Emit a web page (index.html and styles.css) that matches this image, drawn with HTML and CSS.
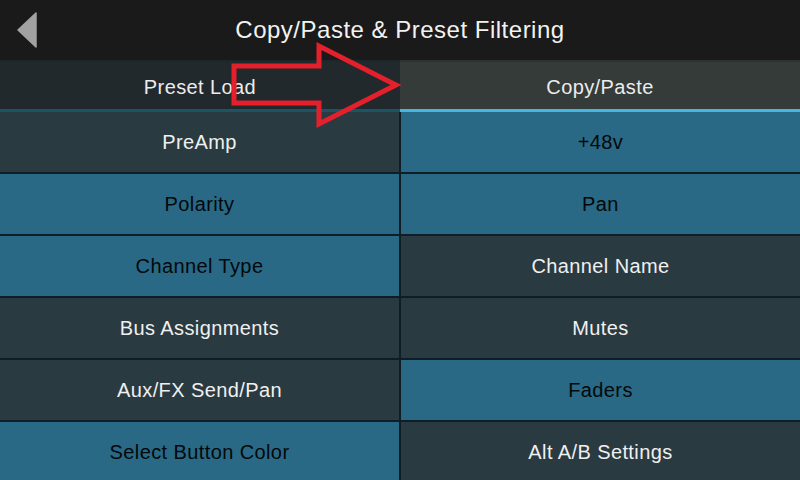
FILE: index.html
```html
<!DOCTYPE html>
<html>
<head>
<meta charset="utf-8">
<link rel="stylesheet" href="styles.css">
</head>
<body>
<div class="screen">
  <header class="header">
    <div class="back">
      <svg width="60" height="60" viewBox="0 0 60 60"><polygon points="36,13 18,30 36,47" fill="#a2a2a2" stroke="#a2a2a2" stroke-width="1.5" stroke-linejoin="round"/></svg>
    </div>
    <div class="title">Copy/Paste &amp; Preset Filtering</div>
    <div class="spacer"></div>
  </header>
  <nav class="tabs">
    <div class="tab tab-off">Preset Load</div>
    <div class="tab tab-on">Copy/Paste</div>
  </nav>
  <main class="grid">
    <div class="cell dark">PreAmp</div>
    <div class="cell on">+48v</div>
    <div class="cell on">Polarity</div>
    <div class="cell on">Pan</div>
    <div class="cell on">Channel Type</div>
    <div class="cell dark">Channel Name</div>
    <div class="cell dark">Bus Assignments</div>
    <div class="cell dark">Mutes</div>
    <div class="cell dark">Aux/FX Send/Pan</div>
    <div class="cell on">Faders</div>
    <div class="cell on">Select Button Color</div>
    <div class="cell dark">Alt A/B Settings</div>
  </main>
  <svg class="callout" width="800" height="480" viewBox="0 0 800 480">
    <polygon points="234,66 319,66 319,46 396,85 319,124 319,103 234,103" fill="none" stroke="#e3202b" stroke-width="5" stroke-linejoin="miter"/>
  </svg>
</div>
</body>
</html>
```

FILE: styles.css
```css
html, body {
  margin: 0;
  padding: 0;
  background: #1a1a1a;
}
.screen {
  position: relative;
  width: 800px;
  height: 480px;
  overflow: hidden;
  display: flex;
  flex-direction: column;
  font-family: "Liberation Sans", Arial, sans-serif;
}
.header {
  height: 60px;
  flex: none;
  display: grid;
  grid-template-columns: 60px 1fr 60px;
  align-items: center;
  background: #1a1a1a;
}
.back, .back svg {
  display: block;
  width: 60px;
  height: 60px;
}
.title {
  text-align: center;
  color: #f2f2f2;
  font-size: 24px;
  letter-spacing: 0.5px;
}
.tabs {
  flex: none;
  height: 52px;
  display: grid;
  grid-template-columns: 400px 400px;
}
.tab {
  display: flex;
  align-items: center;
  justify-content: center;
  color: #ececec;
  font-size: 20px;
  letter-spacing: 0.4px;
  padding-top: 3px;
  box-sizing: border-box;
}
.tab-off {
  background: #21292c;
  border-top: 2px solid #1e272a;
  border-bottom: 3px solid #1c5465;
}
.tab-on {
  background: #343b39;
  border-top: 2px solid #2c3331;
  border-bottom: 3px solid #47b7df;
}
.grid {
  flex: 1;
  display: grid;
  grid-template-columns: 399px 399px;
  grid-auto-rows: 60px;
  gap: 2px;
  background: #0f1e26;
  overflow: hidden;
}
.cell {
  display: flex;
  align-items: center;
  justify-content: center;
  font-size: 20px;
  letter-spacing: 0.4px;
}
.dark {
  background: #2a3a41;
  color: #f0f0f0;
}
.on {
  background: #296985;
  color: #03080b;
}
.callout {
  position: absolute;
  left: 0;
  top: 0;
  pointer-events: none;
}
```
